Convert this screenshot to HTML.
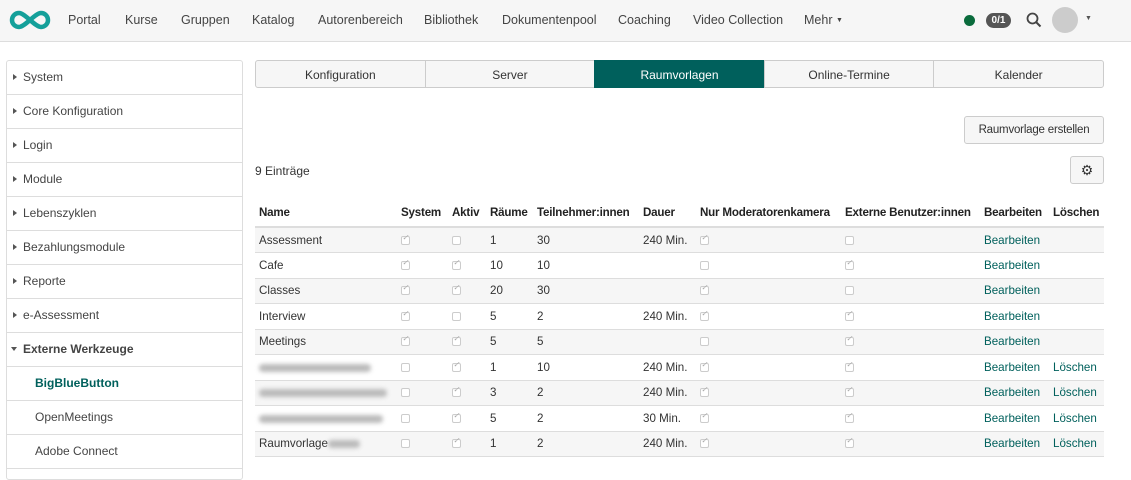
<!DOCTYPE html>
<html><head><meta charset="utf-8"><style>
*{box-sizing:border-box;margin:0;padding:0}
body{width:1131px;height:473px;overflow:hidden;background:#fff;font-family:"Liberation Sans",sans-serif;font-size:12px;color:#333;position:relative}
.top{position:absolute;left:0;top:0;width:1131px;height:42px;background:#f6f6f6;border-bottom:1px solid #ddd}
.nav{position:absolute;top:13px;font-size:12.5px;color:#444}
.side{position:absolute;left:6px;top:60px;width:237px;height:420px;border:1px solid #ddd;border-radius:3px}
.si{height:34px;border-bottom:1px solid #ddd;padding:9px 0 0 16px;color:#444;position:relative}
.si:before{content:"";position:absolute;left:6px;top:13px;border-left:4px solid #555;border-top:3.5px solid transparent;border-bottom:3.5px solid transparent}
.si.open:before{left:4px;top:14px;border-top:4px solid #555;border-left:3.5px solid transparent;border-right:3.5px solid transparent;border-bottom:0}
.si.sub{padding-left:28px}.si.sub:before{display:none}
.tabs{position:absolute;left:255px;top:60px;width:849px;height:28px;display:flex}
.tab{flex:1;border:1px solid #ccc;background:#f6f6f6;text-align:center;padding-top:7px;margin-left:-1px}
.tab:first-child{border-radius:3px 0 0 3px;margin-left:0}.tab:last-child{border-radius:0 3px 3px 0}
.tab.act{background:#00605c;color:#fff;border-color:#00605c}
.btn{position:absolute;border:1px solid #ccc;border-radius:3px;background:#f6f6f6}
table{position:absolute;left:255px;top:201px;width:849px;border-collapse:collapse;table-layout:fixed;font-size:11.6px}
th{text-align:left;font-weight:bold;height:26px;padding:0 4px 2px;border-bottom:2px solid #ddd;white-space:nowrap;vertical-align:middle;color:#222;overflow:visible;letter-spacing:-0.2px}
td{height:25.5px;padding:0 4px;border-bottom:1px solid #ddd;white-space:nowrap}
tr.g td{background:#f6f6f6}
.cb{display:inline-block;width:9px;height:9px;border:1px solid #ccc;border-radius:2px;background:#fff;position:relative;top:1px}
.cb.c:after{content:"✓";position:absolute;left:0;top:-4px;font-size:8px;color:#aaa}
a{color:#00605c;text-decoration:none}
.blur{display:inline-block;height:8px;background:#bbb;border-radius:4px;filter:blur(2px);vertical-align:middle}
</style></head><body>
<div class="top">
<svg style="position:absolute;left:8px;top:9px" width="44" height="22" viewBox="0 0 44 22"><path d="M11 4a7 7 0 1 0 0 14c6 0 16-14 22-14a7 7 0 1 1 0 14C27 18 17 4 11 4z" fill="none" stroke="#14a09a" stroke-width="4.5"/></svg>
<span class="nav" style="left:68px">Portal</span><span class="nav" style="left:125px">Kurse</span><span class="nav" style="left:181px">Gruppen</span><span class="nav" style="left:252px">Katalog</span><span class="nav" style="left:318px">Autorenbereich</span><span class="nav" style="left:424px">Bibliothek</span><span class="nav" style="left:502px">Dokumentenpool</span><span class="nav" style="left:618px">Coaching</span><span class="nav" style="left:693px">Video Collection</span><span class="nav" style="left:804px">Mehr <span style="font-size:7px;position:relative;top:-2px">▼</span></span>
<div style="position:absolute;left:964px;top:15px;width:11px;height:11px;border-radius:50%;background:#0a6b3c"></div>
<div style="position:absolute;left:986px;top:13px;width:25px;height:15px;border-radius:8px;background:#555;color:#fff;font-size:10px;font-weight:bold;text-align:center;line-height:15px">0/1</div>
<svg style="position:absolute;left:1026px;top:12px" width="16" height="16"><circle cx="6.5" cy="6.5" r="5" fill="none" stroke="#444" stroke-width="1.8"/><line x1="10" y1="10" x2="14.5" y2="14.5" stroke="#444" stroke-width="2"/></svg>
<div style="position:absolute;left:1052px;top:7px;width:26px;height:26px;border-radius:50%;background:#ccc"></div>
<span style="position:absolute;left:1085px;top:15px;font-size:7px;color:#555">▼</span>
</div>
<div class="side">
<div class="si">System</div><div class="si">Core Konfiguration</div><div class="si">Login</div><div class="si">Module</div><div class="si">Lebenszyklen</div><div class="si">Bezahlungsmodule</div><div class="si">Reporte</div><div class="si">e-Assessment</div>
<div class="si open" style="font-weight:bold">Externe Werkzeuge</div>
<div class="si sub" style="font-weight:bold;color:#00605c">BigBlueButton</div><div class="si sub">OpenMeetings</div><div class="si sub">Adobe Connect</div>
</div>
<div class="tabs"><div class="tab">Konfiguration</div><div class="tab">Server</div><div class="tab act">Raumvorlagen</div><div class="tab">Online-Termine</div><div class="tab">Kalender</div></div>
<div class="btn" style="left:964px;top:116px;width:140px;height:28px;padding:7px 0 0 0;text-align:center;font-size:11.5px;letter-spacing:-0.2px">Raumvorlage erstellen</div>
<div style="position:absolute;left:255px;top:164px">9 Einträge</div>
<div class="btn" style="left:1070px;top:156px;width:34px;height:28px;text-align:center;padding-top:5px;font-size:14px;color:#333">⚙</div>
<table>
<colgroup><col style="width:142px"><col style="width:51px"><col style="width:38px"><col style="width:47px"><col style="width:106px"><col style="width:57px"><col style="width:145px"><col style="width:139px"><col style="width:69px"><col style="width:55px"></colgroup>
<tr><th>Name</th><th>System</th><th>Aktiv</th><th>Räume</th><th>Teilnehmer:innen</th><th>Dauer</th><th>Nur Moderatorenkamera</th><th>Externe Benutzer:innen</th><th>Bearbeiten</th><th>Löschen</th></tr>
<tr class="g"><td>Assessment</td><td><i class="cb c"></i></td><td><i class="cb"></i></td><td>1</td><td>30</td><td>240 Min.</td><td><i class="cb c"></i></td><td><i class="cb"></i></td><td><a>Bearbeiten</a></td><td></td></tr>
<tr><td>Cafe</td><td><i class="cb c"></i></td><td><i class="cb c"></i></td><td>10</td><td>10</td><td></td><td><i class="cb"></i></td><td><i class="cb c"></i></td><td><a>Bearbeiten</a></td><td></td></tr>
<tr class="g"><td>Classes</td><td><i class="cb c"></i></td><td><i class="cb c"></i></td><td>20</td><td>30</td><td></td><td><i class="cb c"></i></td><td><i class="cb"></i></td><td><a>Bearbeiten</a></td><td></td></tr>
<tr><td>Interview</td><td><i class="cb c"></i></td><td><i class="cb"></i></td><td>5</td><td>2</td><td>240 Min.</td><td><i class="cb c"></i></td><td><i class="cb c"></i></td><td><a>Bearbeiten</a></td><td></td></tr>
<tr class="g"><td>Meetings</td><td><i class="cb c"></i></td><td><i class="cb c"></i></td><td>5</td><td>5</td><td></td><td><i class="cb"></i></td><td><i class="cb c"></i></td><td><a>Bearbeiten</a></td><td></td></tr>
<tr><td><span class="blur" style="width:112px"></span></td><td><i class="cb"></i></td><td><i class="cb c"></i></td><td>1</td><td>10</td><td>240 Min.</td><td><i class="cb c"></i></td><td><i class="cb c"></i></td><td><a>Bearbeiten</a></td><td><a>Löschen</a></td></tr>
<tr class="g"><td><span class="blur" style="width:128px"></span></td><td><i class="cb"></i></td><td><i class="cb c"></i></td><td>3</td><td>2</td><td>240 Min.</td><td><i class="cb c"></i></td><td><i class="cb c"></i></td><td><a>Bearbeiten</a></td><td><a>Löschen</a></td></tr>
<tr><td><span class="blur" style="width:124px"></span></td><td><i class="cb"></i></td><td><i class="cb c"></i></td><td>5</td><td>2</td><td>30 Min.</td><td><i class="cb c"></i></td><td><i class="cb c"></i></td><td><a>Bearbeiten</a></td><td><a>Löschen</a></td></tr>
<tr class="g"><td>Raumvorlage<span class="blur" style="width:32px"></span></td><td><i class="cb"></i></td><td><i class="cb c"></i></td><td>1</td><td>2</td><td>240 Min.</td><td><i class="cb c"></i></td><td><i class="cb c"></i></td><td><a>Bearbeiten</a></td><td><a>Löschen</a></td></tr>
</table>
</body></html>
